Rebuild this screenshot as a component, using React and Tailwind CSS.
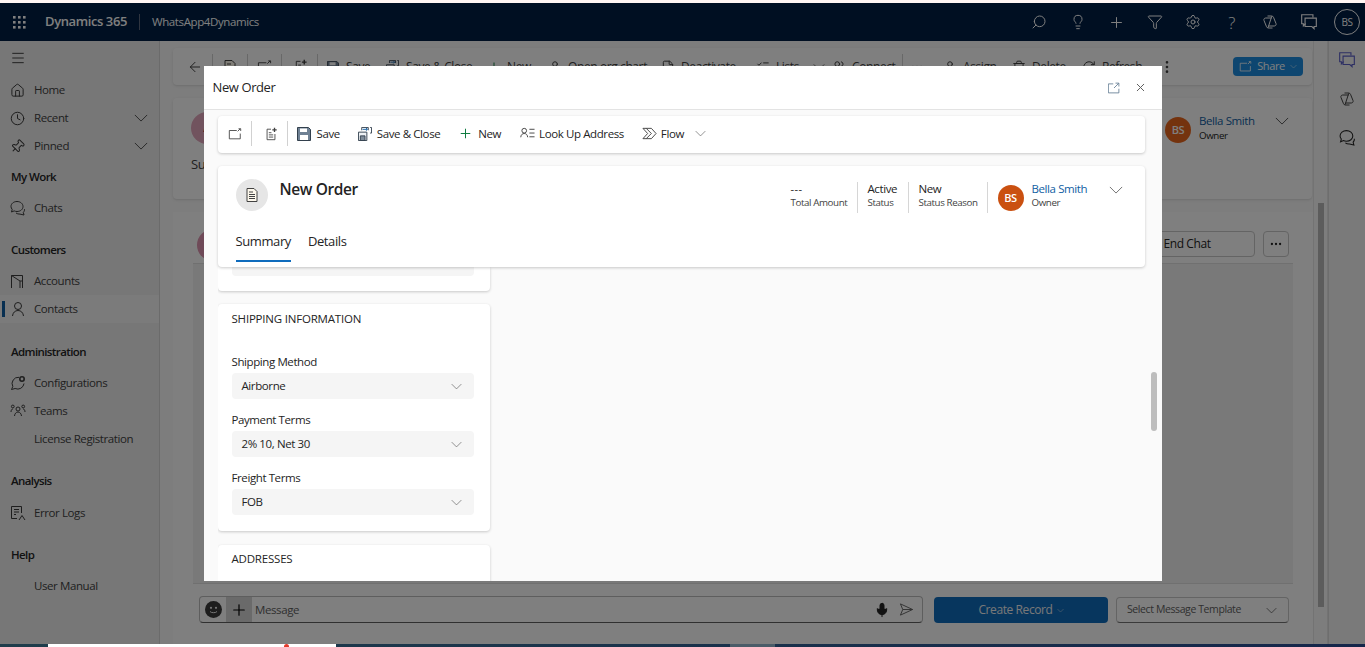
import {
  Plus,
  Search,
  Lightbulb,
  Funnel,
  Settings,
  Home,
  Clock,
  Pin,
  Menu,
  ArrowLeft,
  Mic,
  X,
  Ellipsis,
  EllipsisVertical,
  User,
  Trash2,
  RefreshCw,
  ListChecks,
  Users,
  FileX,
} from 'lucide-react';

const thin = { strokeWidth: 1, absoluteStrokeWidth: true };

function Chevron({ size = 14, className = '' }) {
  return (
    <svg width={size} height={size} viewBox="0 0 16 16" fill="none" stroke="currentColor" className={`shrink-0 ${className}`}>
      <path d="M1 4.5 8 11.5 15 4.5" />
    </svg>
  );
}

function Icon({ size = 16, className = '', children }) {
  return (
    <svg width={size} height={size} viewBox="0 0 16 16" fill="none" stroke="currentColor" className={`shrink-0 ${className}`}>
      {children}
    </svg>
  );
}

const ChatBubble = ({ size = 17, className }) => (
  <Icon size={size} className={className}>
    <path d="M7 1.500c3.300 0 6 2.100 6 5s-2.700 5-6 5c-1 0-2-.2-2.800-.6L1.500 12l.7-2.600C1.400 8.500 1 7.500 1 6.500c0-2.900 2.700-5 6-5z" />
    <path d="M6 13c1 .8 2.500 1.200 4 1.100l4 .9-.7-2.600c.9-.9 1.300-2 1.200-3.200" />
  </Icon>
);

const Copilot = ({ size = 16, className }) => (
  <Icon size={size} className={className}>
    <path d="M5.500 2h4.200c.9 0 1.500.6 1.800 1.300l2.500 6.200c.5 1.300-.4 2.500-1.700 2.500H6.500" />
    <path d="M10.500 14H6.300c-.9 0-1.500-.6-1.800-1.300L2 6.500C1.500 5.200 2.400 4 3.700 4H9.500" />
    <path d="M9.800 2.200 6 13.800" />
  </Icon>
);

const Chats = ({ size = 18, className }) => (
  <Icon size={size} className={className}>
    <path d="M11.500 4V1.500h-10v8H3v2l2-2" />
    <path d="M4.500 4.500h10v7.500h-2v2l-2-2h-6z" />
  </Icon>
);

const Accounts = () => (
  <Icon>
    <path d="M1.500 15V2.500h11V15" />
    <path d="M1.500 2.500 10 8v7" />
    <path d="M10 8h2.500" />
  </Icon>
);

const Contact = () => (
  <Icon>
    <circle cx="8" cy="5" r="3.500" />
    <path d="M2.500 15c.3-3.300 2.500-5.500 5.500-5.500s5.200 2.200 5.500 5.500" />
  </Icon>
);

const Configure = () => (
  <Icon>
    <path d="M9 2.300A6.300 6.300 0 0 0 2.800 11.500L1.500 14.500l3.600-1A6.300 6.300 0 0 0 14 8.500" />
    <circle cx="12" cy="4" r="2.200" strokeWidth="1.600" />
  </Icon>
);

const Teams = () => (
  <Icon>
    <circle cx="8" cy="6" r="2" />
    <path d="M4.500 13c.2-2.300 1.600-4 3.500-4s3.300 1.700 3.500 4" />
    <circle cx="2.800" cy="3.500" r="1.400" />
    <circle cx="13.200" cy="3.500" r="1.400" />
    <path d="M1 9c0-1.700.7-3 1.800-3M15 9c0-1.700-.7-3-1.800-3" />
  </Icon>
);

const ErrorLog = () => (
  <Icon>
    <path d="M11.500 8V1.500h-10v12H7" />
    <path d="M4 4.500h5M4 7h5M4 9.500h2" />
    <path d="M9 15l3-4.500 3 4.500" />
  </Icon>
);

const OpenWindow = ({ size = 15, className }) => (
  <Icon size={size} className={className}>
    <path d="M10 4H1.500v9.500h12.500V7.500" />
    <path d="M11 5l3-3M12 2h2.500v2.500" />
  </Icon>
);

const DocSpark = ({ size = 15, className }) => (
  <Icon size={size} className={className}>
    <path d="M8 2.500H3.500v12h9V8" />
    <path d="M5.500 6.500h3M5.500 9h5M5.500 11.500h5" />
    <path d="M12 .8v5M9.500 3.300h5" strokeWidth="1.500" />
  </Icon>
);

const Floppy = ({ size = 14, className }) => (
  <svg width={size} height={size} viewBox="0 0 14 14" className={`shrink-0 ${className}`}>
    <path d="M.5.5h11l2 2v11H.5z" fill="#6f8194" stroke="#33404d" />
    <path d="M3 1.500h7v3.500H3zM3 8h8v5H3z" fill="#fff" />
  </svg>
);

const FloppyArrows = ({ size = 15, className }) => (
  <svg width={size} height={size} viewBox="0 0 15 15" fill="none" stroke="#33404d" className={`shrink-0 ${className}`}>
    <path d="M.5 5.500h9v9h-9z" fill="#eef1f4" />
    <path d="M2.500 9.500h5v5h-5z" fill="#7f8c99" />
    <path d="M4 3.500V.5h7v3M13 .5h1.500v6H13" />
    <path d="M5 2.500h5M8.500 1l1.500 1.500L8.500 4" stroke="#115ea3" />
  </svg>
);

const LookUp = ({ className }) => (
  <Icon size={15} className={className}>
    <circle cx="4.500" cy="5" r="2.500" />
    <path d="M.8 12c.2-2.600 1.700-4 3.700-4s3.500 1.400 3.700 4" />
    <path d="M10 3.500h5.500M10 7.500h5.500M10 11.500h5.500" />
  </Icon>
);

const Flow = ({ className }) => (
  <Icon size={15} className={className}>
    <path d="M1 2.500h9l5 5.500-5 5.500H1l5-5.500z" />
    <path d="M4.500 2.500 10 8l-5.500 5.500" />
  </Icon>
);

const DocLines = ({ className }) => (
  <Icon size={16} className={className}>
    <path d="M3 1.500h7l3 3v10H3z" fill="#fdf8ec" />
    <path d="M5 5h4M5 7.500h6M5 9.500h6M5 11.500h6" />
  </Icon>
);

const Send = ({ className }) => (
  <Icon size={15} className={className}>
    <path d="M1.500 2 14.500 8 1.500 14l2.500-6z" />
    <path d="M4 8h10.500" />
  </Icon>
);

const Expand = ({ className }) => (
  <Icon size={12} className={className}>
    <path d="M7 2.500H.5v12h14V9" />
    <path d="M8 8l6-6M10 1.500h4.500V6" />
  </Icon>
);

const Smile = () => (
  <svg width="17" height="17" viewBox="0 0 17 17" className="shrink-0">
    <circle cx="8.500" cy="8.500" r="8.500" fill="#3a3a3a" />
    <circle cx="6" cy="6.800" r="1.100" fill="#eee" />
    <circle cx="11" cy="6.800" r="1.100" fill="#eee" />
    <path d="M5 10.500c1 1.600 6 1.600 7 0" fill="none" stroke="#eee" />
  </svg>
);

const Waffle = () => (
  <svg width="13" height="13" viewBox="0 0 13 13" fill="currentColor" className="shrink-0">
    {[0, 5, 10].map((y) =>
      [0, 5, 10].map((x) => <rect key={`${x}-${y}`} x={x} y={y} width="2.600" height="2.600" />),
    )}
  </svg>
);

function Sep({ className = '' }) {
  return <div className={`h-[25px] w-px shrink-0 bg-[#d1d1d1] ${className}`} />;
}

const navTop = [
  { label: 'Home', icon: <Home size={15} {...thin} /> },
  { label: 'Recent', icon: <Clock size={15} {...thin} />, chevron: true },
  { label: 'Pinned', icon: <Pin size={15} {...thin} className="rotate-45" />, chevron: true },
];

const navGroups = [
  { title: 'My Work', mt: 'mt-[5px]', items: [{ label: 'Chats', icon: <ChatBubble size={16} /> }] },
  {
    title: 'Customers',
    mt: 'mt-[16px]',
    items: [
      { label: 'Accounts', icon: <Accounts /> },
      { label: 'Contacts', icon: <Contact />, active: true },
    ],
  },
  {
    title: 'Administration',
    mt: 'mt-[17px]',
    items: [
      { label: 'Configurations', icon: <Configure /> },
      { label: 'Teams', icon: <Teams /> },
      { label: 'License Registration' },
    ],
  },
  { title: 'Analysis', mt: 'mt-[16px]', rowGap: 'mt-[6px]', items: [{ label: 'Error Logs', icon: <ErrorLog /> }] },
  { title: 'Help', mt: 'mt-[16px]', items: [{ label: 'User Manual' }] },
];

const commands = [
  { label: 'Save', w: 'w-[59px]', icon: <Floppy size={12} className="mx-[1px]" /> },
  { label: 'Save & Close', w: 'w-[102px]', icon: <FloppyArrows size={13} className="mx-[1px]" /> },
  { label: 'New', w: 'w-[61px]', icon: <Plus size={14} {...thin} className="text-[#107c41]" /> },
  { label: 'Open org chart', w: 'w-[113px]', icon: <User size={14} {...thin} /> },
  { label: 'Deactivate', w: 'w-[95px]', icon: <FileX size={14} {...thin} /> },
  { label: 'Lists', w: 'w-[76px]', icon: <ListChecks size={14} {...thin} />, chevron: true },
  { label: 'Connect', w: 'w-[70px]', icon: <Users size={14} {...thin} /> },
];

const commandsAfter = [
  { label: 'Assign', w: 'w-[69px]', icon: <User size={14} {...thin} /> },
  { label: 'Delete', w: 'w-[70px]', icon: <Trash2 size={14} {...thin} /> },
  { label: 'Refresh', w: 'w-[77px]', icon: <RefreshCw size={14} {...thin} /> },
];

const shippingFields = [
  ['Shipping Method', 'Airborne'],
  ['Payment Terms', '2% 10, Net 30'],
  ['Freight Terms', 'FOB'],
];

function NavRow({ item }) {
  return (
    <div className={`relative flex h-[28px] items-center pl-[10px] pr-[11px] ${item.active ? 'bg-[#f7f7f7]' : ''}`}>
      {item.active && <span className="absolute left-[2px] top-[6px] h-[16px] w-[3px] bg-[#115ea3]" />}
      <span className="flex w-[24px] shrink-0 text-[#3d3d3d]">{item.icon}</span>
      <span className="flex-1 text-[11.5px] text-[#424242]">{item.label}</span>
      {item.chevron && <Chevron className="text-[#424242]" />}
    </div>
  );
}

function Sidebar() {
  return (
    <aside className="flex w-[160px] shrink-0 flex-col border-r border-[#d6d6d6] bg-[#eeeeee] pt-[8px]">
      <div className="flex h-[18px] items-center pl-[10px] text-[#424242]">
        <Menu size={16} {...thin} />
      </div>
      <div className="mt-[9px]">
        {navTop.map((item) => (
          <NavRow key={item.label} item={item} />
        ))}
      </div>
      {navGroups.map((group) => (
        <div key={group.title} className={group.mt}>
          <div className="flex h-[24px] items-center pl-[11px] text-[11.5px] font-semibold tracking-[-0.6px] text-[#242424]">
            {group.title}
          </div>
          <div className={group.rowGap || 'mt-[5px]'}>
            {group.items.map((item) => (
              <NavRow key={item.label} item={item} />
            ))}
          </div>
        </div>
      ))}
    </aside>
  );
}

function CommandItem({ item }) {
  return (
    <div className={`${item.w} flex shrink-0 items-center gap-[6px] text-[12px] text-[#424242]`}>
      {item.icon}
      <span className="whitespace-nowrap">{item.label}</span>
      {item.chevron && <Chevron size={12} className="ml-[8px]" />}
    </div>
  );
}

function Background() {
  return (
    <div className="flex min-w-0 flex-1 flex-col bg-[#fafafa] pl-[13px] pt-[7px]">
      {/* command bar */}
      <div className="mr-px flex h-[37px] shrink-0 items-center rounded bg-white pl-[14px] pr-[9px] text-[#424242] shadow-sm">
        <ArrowLeft size={16} {...thin} />
        <Sep className="ml-[9px]" />
        <DocLines className="ml-[9px]" />
        <Sep className="ml-[9px]" />
        <OpenWindow className="ml-[9px]" />
        <Sep className="ml-[9px]" />
        <DocSpark className="ml-[11px]" />
        <Sep className="ml-[9px]" />
        <div className="ml-[8px] flex">
          {commands.map((item) => (
            <CommandItem key={item.label} item={item} />
          ))}
        </div>
        <Sep />
        <Ellipsis size={14} className="ml-[7px] mr-[19px] text-[#757575]" />
        {commandsAfter.map((item) => (
          <CommandItem key={item.label} item={item} />
        ))}
        <EllipsisVertical size={16} />
        <button className="ml-auto flex h-[19px] w-[70px] items-center justify-center gap-[5px] rounded-sm bg-[#1c8de0] text-[11px] text-white">
          <OpenWindow size={13} />
          Share
          <Chevron size={7} />
        </button>
      </div>

      {/* record header */}
      <div className="mr-px mt-[13px] flex h-[101px] shrink-0 flex-col rounded bg-white pl-[18px] pr-[23px] pt-[14px] shadow-sm">
        <div className="flex items-start justify-between">
          <div className="flex h-[32px] w-[32px] items-center justify-center rounded-full bg-[#e3a7bd] text-[12px] font-semibold text-[#6b1d3a]">
            A
          </div>
          <div className="mt-[5px] flex items-start">
            <div className="mr-[8px] flex h-[26px] w-[26px] items-center justify-center rounded-full bg-[#e9661d] text-[11px] font-semibold text-white">
              BS
            </div>
            <div className="-mt-[3px] w-[76px]">
              <div className="text-[11.5px] leading-[14px] text-[#115ea3]">Bella Smith</div>
              <div className="mt-px text-[9.75px] leading-[14px] text-[#242424]">Owner</div>
            </div>
            <Chevron className="-mt-[3px] text-[#424242]" />
          </div>
        </div>
        <div className="mt-[11px] text-[13px] text-[#424242]">Summary</div>
      </div>

      {/* chat card */}
      <div className="mt-[13px] flex min-h-0 flex-1 flex-col bg-white px-[20px]">
        <div className="flex h-[51px] shrink-0 items-start justify-between px-[4px] pt-[17px]">
          <div className="h-[32px] w-[32px] rounded-full bg-[#de95b0]" />
          <div className="mt-[2px] flex items-center gap-[8px]">
            <button className="h-[26px] w-[136px] rounded-sm border border-[#c8c8c8] text-[12px] font-medium text-[#242424]">
              End Chat
            </button>
            <button className="flex h-[26px] w-[26px] items-center justify-center rounded-sm border border-[#c8c8c8] text-[#242424]">
              <Ellipsis size={14} />
            </button>
          </div>
        </div>
        <div className="min-h-0 flex-1 border-y border-[#e0e0e0] bg-[#f3f3f3]" />
        <div className="flex h-[60px] shrink-0 items-start gap-[11px] pl-[6px] pr-[4px] pt-[12px]">
          <div className="flex h-[27px] flex-1 items-center rounded-sm border border-[#bdbdbd] border-b-[#616161]">
            <span className="ml-[5px] flex">
              <Smile />
            </span>
            <span className="ml-[4px] flex h-full w-[26px] items-center justify-center bg-[#d4d4d4] text-black">
              <Plus size={18} strokeWidth={1.6} />
            </span>
            <span className="ml-[3px] flex-1 text-[11.5px] text-[#616161]">Message</span>
            <Mic size={16} strokeWidth={1.5} fill="currentColor" className="mr-[9px] text-[#242424]" />
            <Send className="mr-[8px] text-[#616161]" />
          </div>
          <button className="mt-px flex h-[26px] w-[174px] shrink-0 items-center justify-center gap-[4px] rounded-sm bg-[#0f6cbd] text-[12px] font-medium text-[#f0f0f0]">
            Create Record
            <Chevron size={7} />
          </button>
          <div className="-ml-[3px] mt-px flex h-[26px] w-[173px] shrink-0 items-center justify-between rounded-sm border border-[#c8c8c8] border-b-[#757575] pl-[10px] pr-[11px] text-[10.5px] text-[#616161]">
            Select Message Template
            <Chevron size={11} className="text-[#424242]" />
          </div>
        </div>
      </div>
    </div>
  );
}

function RightRail() {
  return (
    <aside className="flex w-[37px] shrink-0 flex-col items-center gap-[22px] border-l border-[#dcdcdc] bg-[#f5f5f5] pt-[10px]">
      <Chats className="text-[#5b5fc7]" />
      <Copilot className="text-[#424242]" />
      <ChatBubble className="text-[#242424]" />
    </aside>
  );
}

const cardShadow = 'shadow-[0_1px_3px_rgba(0,0,0,0.2)]';

function OrderDialog() {
  return (
    <div className="relative flex h-[515px] w-[958px] flex-col overflow-hidden bg-[#fafafa]">
      <div className="flex h-[44px] shrink-0 items-center justify-between border-b border-[#e3e3e3] bg-white pl-[9px] pr-[15px]">
        <span className="text-[13px] text-[#242424]">New Order</span>
        <div className="flex items-center gap-[14px]">
          <Expand className="text-[#4f6b85]" />
          <X size={13} {...thin} className="text-[#616161]" />
        </div>
      </div>

      <div className="flex min-h-0 flex-1 flex-col pl-[14px] pr-[17px] pt-[6px]">
        {/* toolbar */}
        <div className={`flex h-[37px] shrink-0 items-center rounded bg-white pb-[2px] pl-[10px] text-[11.5px] text-[#242424] ${cardShadow}`}>
          <OpenWindow size={14} className="text-[#424242]" />
          <Sep className="ml-[9px]" />
          <DocSpark size={14} className="ml-[12px] text-[#424242]" />
          <Sep className="ml-[9px]" />
          <Floppy className="ml-[9px] mr-[6px]" />
          <span>Save</span>
          <FloppyArrows size={14} className="ml-[18px] mr-[5px]" />
          <span>Save &amp; Close</span>
          <Plus size={15} {...thin} className="ml-[18px] mr-[5px] text-[#107c41]" />
          <span>New</span>
          <LookUp className="ml-[19px] mr-[4px] text-[#424242]" />
          <span>Look Up Address</span>
          <Flow className="ml-[18px] mr-[4px] text-[#424242]" />
          <span>Flow</span>
          <Chevron size={11} className="ml-[11px] text-[#616161]" />
        </div>

        {/* form header */}
        <div className={`relative z-10 mt-[13px] flex h-[101px] shrink-0 flex-col rounded bg-white pl-[18px] pr-[22px] ${cardShadow}`}>
          <div className="flex pt-[13px]">
            <div className="flex h-[32px] w-[32px] items-center justify-center rounded-full bg-[#e6e6e6] text-[#424242]">
              <DocLines />
            </div>
            <div className="ml-[12px] mt-px text-[15.5px] font-semibold leading-[18px] text-[#242424]">New Order</div>
            <div className="ml-auto mt-[3px] flex items-start leading-[14px]">
              <div className="w-[67px] border-r border-[#d6d6d6] pb-[3px]">
                <div className="text-[11px] tracking-[0.5px] text-[#242424]">---</div>
                <div className="text-[9.75px] text-[#424242]">Total Amount</div>
              </div>
              <div className="w-[51px] border-r border-[#d6d6d6] pb-[3px] pl-[10px]">
                <div className="text-[11.5px] font-medium text-[#242424]">Active</div>
                <div className="text-[9.75px] text-[#424242]">Status</div>
              </div>
              <div className="w-[79px] border-r border-[#d6d6d6] pb-[3px] pl-[10px]">
                <div className="text-[11.5px] font-medium text-[#242424]">New</div>
                <div className="text-[9.75px] text-[#424242]">Status Reason</div>
              </div>
              <div className="ml-[10px] mr-[8px] mt-[3px] flex h-[26px] w-[26px] items-center justify-center rounded-full bg-[#ca5010] text-[11px] font-semibold text-white">
                BS
              </div>
              <div className="w-[77px]">
                <div className="text-[11.5px] text-[#115ea3]">Bella Smith</div>
                <div className="text-[9.75px] text-[#424242]">Owner</div>
              </div>
              <Chevron className="mt-px text-[#616161]" />
            </div>
          </div>
          <div className="mb-[5px] mt-auto flex gap-[17px] text-[13px] leading-[18px] text-[#242424]">
            <div className="border-b-2 border-[#0f6cbd] pb-[10px] font-medium">Summary</div>
            <div>Details</div>
          </div>
        </div>

        {/* scrolled form content */}
        <div className="relative min-h-0 flex-1 overflow-hidden">
          <div className="flex w-[272px] flex-col">
            <div className={`h-[24px] rounded-b bg-white pl-[14px] pr-[16px] ${cardShadow}`}>
              <div className="h-[9px] rounded-b bg-[#f5f5f5]" />
            </div>
            <div className={`mt-[13px] rounded bg-white pb-[16px] pl-[14px] pr-[16px] pt-[7px] ${cardShadow}`}>
              <div className="text-[11.5px] font-medium leading-[16px] tracking-[-0.2px] text-[#242424]">SHIPPING INFORMATION</div>
              <div className="mt-[27px] flex flex-col gap-[13px]">
                {shippingFields.map(([label, value]) => (
                  <div key={label}>
                    <div className="text-[11.5px] leading-[16px] text-[#242424]">{label}</div>
                    <div className="mt-[3px] flex h-[26px] items-center justify-between rounded-sm bg-[#f5f5f5] pl-[10px] pr-[12px] text-[11.5px] text-[#242424]">
                      {value}
                      <Chevron size={11} className="text-[#616161]" />
                    </div>
                  </div>
                ))}
              </div>
            </div>
            <div className={`mt-[14px] h-[60px] rounded bg-white px-[14px] pt-[6px] ${cardShadow}`}>
              <div className="text-[11.5px] font-medium leading-[16px] tracking-[-0.2px] text-[#242424]">ADDRESSES</div>
            </div>
          </div>
        </div>
      </div>

      <div className="absolute right-[5px] top-[306px] h-[59px] w-[6px] rounded-full bg-[#bdbdbd]" />
    </div>
  );
}

function TopIcon({ children }) {
  return <div className="flex w-[38.5px] justify-center">{children}</div>;
}

export default function App() {
  return (
    <div className="flex h-[647px] w-[1365px] flex-col overflow-hidden bg-white font-['Open_Sans',sans-serif] tracking-[-0.4px]">
      <div className="h-[3px] shrink-0 bg-[#fff5f3]" />

      <div className="relative flex min-h-0 flex-1 flex-col">
        <header className="flex h-[38px] shrink-0 items-center bg-[#001e44] pl-[13px] pr-[5px] text-white">
          <Waffle />
          <span className="ml-[19px] text-[13px] font-semibold">Dynamics 365</span>
          <span className="ml-[12px] h-[16px] w-px bg-[#5f6b80]" />
          <span className="ml-[12px] text-[11.5px]">WhatsApp4Dynamics</span>
          <div className="ml-auto flex items-center">
            <TopIcon>
              <Search size={16} {...thin} className="-scale-x-100" />
            </TopIcon>
            <TopIcon>
              <Lightbulb size={16} {...thin} />
            </TopIcon>
            <TopIcon>
              <Plus size={17} {...thin} />
            </TopIcon>
            <TopIcon>
              <Funnel size={16} {...thin} />
            </TopIcon>
            <TopIcon>
              <Settings size={16} {...thin} />
            </TopIcon>
            <TopIcon>
              <span className="text-[17px] font-light leading-none">?</span>
            </TopIcon>
            <TopIcon>
              <Copilot />
            </TopIcon>
            <TopIcon>
              <Chats />
            </TopIcon>
            <div className="ml-[6px] flex h-[26px] w-[26px] items-center justify-center rounded-full border border-white text-[10px]">
              BS
            </div>
          </div>
        </header>

        <div className="flex min-h-0 flex-1">
          <Sidebar />
          <Background />
          <div className="flex w-[15px] shrink-0 justify-center border-x border-[#e6e6e6] bg-[#fafafa] pt-[162px]">
            <div className="h-[404px] w-[6px] bg-[#b8b8b8]" />
          </div>
          <RightRail />
        </div>

        <div className="absolute inset-0 flex items-center justify-center bg-black/50">
          <OrderDialog />
        </div>
      </div>

      <div className="flex h-[3px] shrink-0 bg-gradient-to-r from-[#1f3d4b] to-[#15264a]">
        <div className="ml-[48px] flex h-full w-[288px] bg-white">
          <span className="ml-[236px] h-full w-[5px] rounded-t-full bg-[#e5392b]" />
        </div>
        <div className="ml-[394px] h-full w-[45px] bg-[#4a5c68]" />
      </div>
    </div>
  );
}
